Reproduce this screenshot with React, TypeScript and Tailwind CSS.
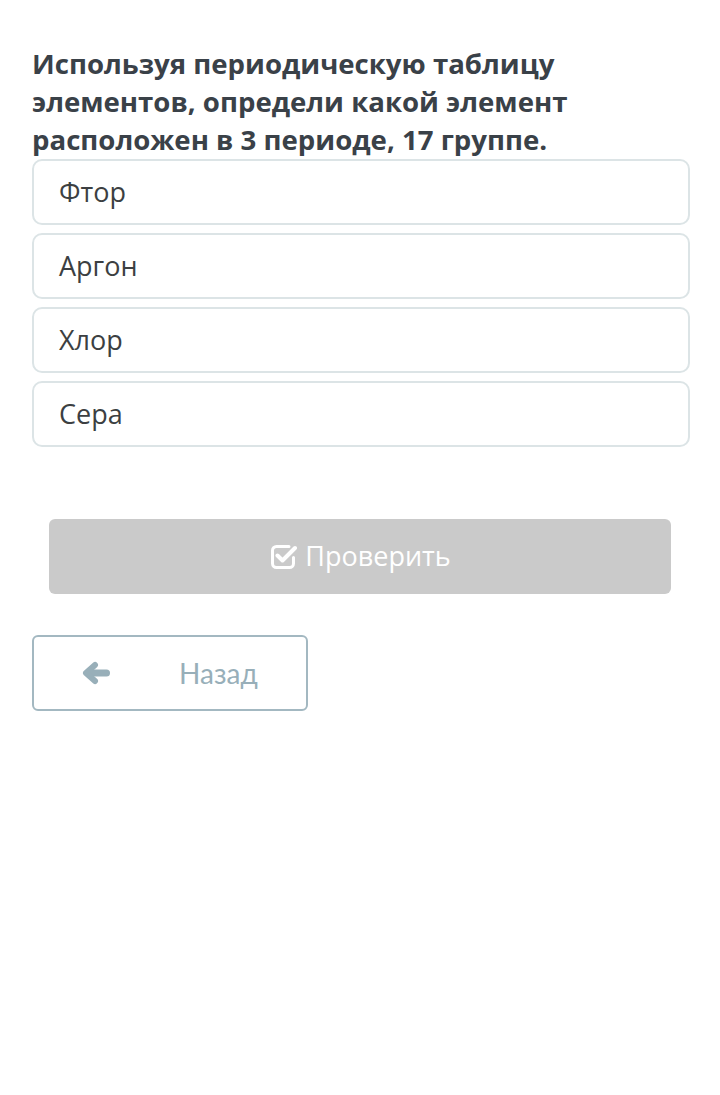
const options = ['Фтор', 'Аргон', 'Хлор', 'Сера'];

const CheckSquare = () => (
  <svg viewBox="0 0 28 28" className="h-[28px] w-[28px]" fill="none">
    <path
      d="M20 3.5H7.5A4 4 0 0 0 3.5 7.5v13a4 4 0 0 0 4 4h13a4 4 0 0 0 4-4v-6"
      stroke="white"
      strokeWidth="3"
      strokeLinecap="round"
    />
    <path d="M8.5 12.5l5 5L26 5" stroke="white" strokeWidth="4" strokeLinecap="round" strokeLinejoin="round" />
  </svg>
);

const ArrowLeft = () => (
  <svg viewBox="0 0 28 24" className="h-[24px] w-[28px]" fill="none">
    <path d="M24.5 12H6" stroke="currentColor" strokeWidth="7" strokeLinecap="round" />
    <path d="M13 4L4 12l9 8" stroke="currentColor" strokeWidth="6" strokeLinecap="round" strokeLinejoin="round" />
  </svg>
);

export default function App() {
  return (
    <div className="min-h-[1095px] bg-white px-[32px] pt-[44px]" style={{ fontFamily: '"Open Sans", "Noto Sans", sans-serif' }}>
      <h1 className="text-[27.6px] font-bold leading-[38px] text-[#3a4148]">
        Используя периодическую таблицу элементов, определи какой элемент расположен в 3 периоде, 17 группе.
      </h1>

      <div className="mt-px mr-[-2px] flex flex-col gap-[8px]">
        {options.map((o) => (
          <div
            key={o}
            className="flex h-[66px] items-center rounded-[10px] border-2 border-[#dce4e6] bg-white px-[25px] text-[27px] text-[#3c3f42]"
          >
            {o}
          </div>
        ))}
      </div>

      <div className="mt-[72px] px-[17px]">
        <button className="flex h-[75px] w-full items-center justify-center gap-[8px] rounded-[6px] bg-[#cacaca] text-[27px] text-white">
          <CheckSquare />
          Проверить
        </button>
      </div>

      <button
        className="mt-[41px] flex h-[76px] w-[276px] items-center rounded-[6px] border-2 border-[#a3b8c1] text-[28px] text-[#98afb9]"
        style={{ fontFamily: 'Lato, sans-serif' }}
      >
        <span className="flex w-[124px] justify-center">
          <ArrowLeft />
        </span>
        <span className="ml-[21px]">Назад</span>
      </button>
    </div>
  );
}
